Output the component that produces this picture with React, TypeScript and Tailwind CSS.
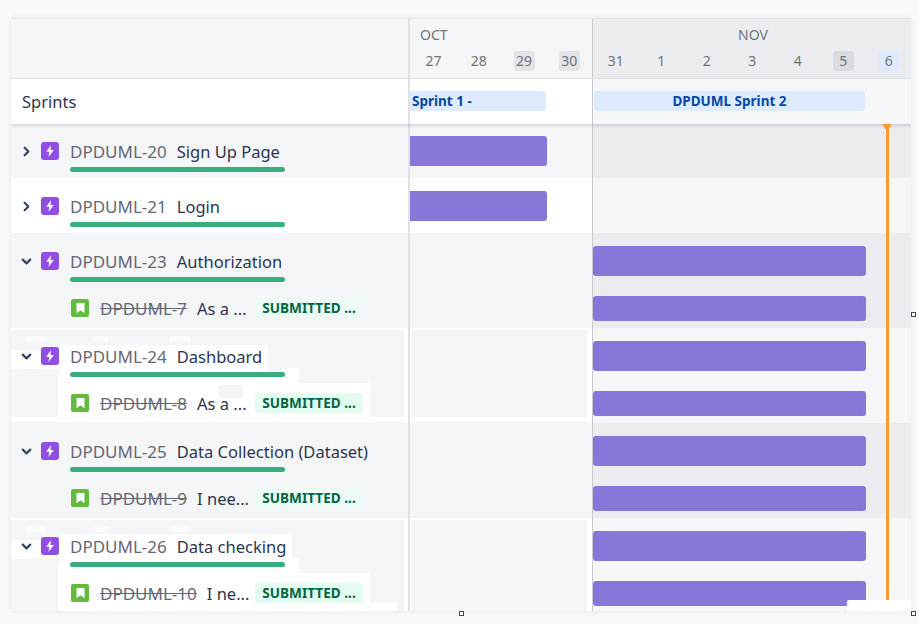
import type { ReactNode } from "react";
import { ChevronDown, ChevronRight } from "lucide-react";

const days = [
  { d: "31" }, { d: "1" }, { d: "2" }, { d: "3" }, { d: "4" },
  { d: "5", cls: "bg-[#d9dbe0]" }, { d: "6", cls: "bg-[#deebff]" },
];

function EpicIcon() {
  return (
    <span className="flex h-[18px] w-[18px] shrink-0 items-center justify-center rounded-[3px] bg-[#904ee2]">
      <svg width="12" height="14" viewBox="0 0 10 12"><path d="M5.9 0.8 1.8 6.7h2.6L3.7 11.2 8.3 5.1H5.4z" fill="#fff" /></svg>
    </span>
  );
}

function StoryIcon() {
  return (
    <span className="flex h-[18px] w-[18px] shrink-0 items-center justify-center rounded-[2px] bg-[#63ba3c]">
      <svg width="11" height="12" viewBox="0 0 10 12"><path d="M1.6 1h6.8a.6.6 0 0 1 .6.6v9.6L5 8.3 1 11.2V1.6a.6.6 0 0 1 .6-.6z" fill="#fff" /></svg>
    </span>
  );
}

function Bar({ h, left }: { h: string; left?: boolean }) {
  return <div className={`bg-[#8777d9] ${h} ${left ? "w-[137px] rounded-r-[3px]" : "w-[273px] rounded-[3px]"}`} />;
}

function EpicLabel({ id, name, open, first }: { id: string; name: string; open?: boolean; first?: boolean }) {
  return (
    <div className={`flex h-[55px] pl-[8px] ${first ? "-mt-[1px]" : ""}`}>
      <span className="flex w-[22px] shrink-0 pt-[21px] text-[#344563]">
        {open ? <ChevronDown size={15} strokeWidth={3.5} /> : <ChevronRight size={15} strokeWidth={3.5} />}
      </span>
      <span className="flex w-[29px] shrink-0 pt-[19px]"><EpicIcon /></span>
      <div className="flex w-[215px] shrink-0 flex-col pt-[17px]">
        <div className="flex h-[24px] items-center whitespace-nowrap leading-[24px]">
          <span className="text-[17px] text-[#636875]">{id}</span>
          <span className="ml-[10px] text-[16.5px] text-[#2c3650]">{name}</span>
        </div>
        <div className="mt-[3px] h-[5px] w-[215px] rounded-full bg-[#38ae7e]" />
      </div>
    </div>
  );
}

function StoryLabel({ id, text, pale }: { id: string; text: string; pale?: boolean }) {
  return (
    <div className="flex h-[40px] items-start pl-[60px]">
      <div className="flex w-[184px] shrink-0 items-start">
        <span className="mt-[11px]"><StoryIcon /></span>
        <span className="ml-[11px] mt-[9px] whitespace-nowrap text-[17px] leading-[24px] text-[#636875] line-through">{id}</span>
        <span className="ml-[10px] mt-[9px] whitespace-nowrap text-[16.5px] leading-[24px] text-[#2c3650]">{text}</span>
      </div>
      <span className={`mt-[10px] flex h-[20px] w-[108px] items-center justify-center rounded-[3px] text-[13.6px] font-bold text-[#006644] ${pale ? "bg-[#ecfaf3]" : "bg-[#e3fcef]"}`}>SUBMITTED ...</span>
    </div>
  );
}

// white smudges that sit behind the text of the re-pasted rows
function Smudge({ cls }: { cls: string }) {
  return <div className={`absolute rounded-[2px] ${cls}`} />;
}

function Row({ left, octBg, novBg, children, oct, h, under, octUnder }: {
  left: ReactNode; octBg: string; novBg: string; children?: ReactNode; oct?: ReactNode; h: string; under?: ReactNode; octUnder?: ReactNode;
}) {
  return (
    <div className={`flex ${h}`}>
      <div className={`relative w-[397px] shrink-0 ${octBg}`}>
        {under}
        <div className="relative">{left}</div>
      </div>
      <div className={`relative w-[184px] shrink-0 border-l-2 border-[#dfe1e6] ${octBg}`}>{octUnder}{oct}</div>
      <div className={`flex-1 border-l border-[#c8cad0] ${novBg}`}>{children}</div>
    </div>
  );
}

function RowSmudges({ wide }: { wide?: boolean }) {
  return (
    <>
      <Smudge cls="left-0 top-0 h-[2px] w-[397px] bg-white" />
      <Smudge cls="left-[393px] top-0 h-[95px] w-[4px] bg-white" />
      {wide
        ? <Smudge cls="left-[47px] top-[85px] h-[8px] w-[340px] bg-white" />
        : <Smudge cls="left-0 top-[89px] h-[5px] w-[397px] bg-white" />}
      <Smudge cls="left-0 top-[22px] h-[19px] w-[52px] bg-white" />
      <Smudge cls="left-[15px] top-[8px] h-[6px] w-[20px] bg-white/60" />
      <Smudge cls="left-[82px] top-[8px] h-[6px] w-[16px] bg-white/60" />
      <Smudge cls="left-[158px] top-[8px] h-[6px] w-[22px] bg-white/60" />
      <Smudge cls={wide ? "left-[49px] top-[16px] h-[34px] w-[232px] bg-white" : "left-[49px] top-[17px] h-[32px] w-[208px] bg-white"} />
      <Smudge cls="left-[270px] top-[40px] h-[13px] w-[18px] bg-white" />
      <Smudge cls="left-[47px] top-[47px] h-[10px] w-[240px] bg-white" />
      <Smudge cls="left-[47px] top-[55px] h-[35px] w-[312px] bg-white" />
      {!wide && <Smudge cls="left-[207px] top-[57px] h-[13px] w-[25px] bg-[#f4f5f7]" />}
    </>
  );
}

function OctSmudges({ wide }: { wide?: boolean }) {
  return (
    <>
      <Smudge cls="left-0 top-0 h-[2px] w-[182px] bg-white" />
      <Smudge cls="left-0 top-0 h-[95px] w-[2px] bg-white" />
      <Smudge cls="left-[177px] top-0 h-[95px] w-[5px] bg-white" />
      {!wide && <Smudge cls="left-0 top-[89px] h-[5px] w-[182px] bg-white" />}
    </>
  );
}

const groups = [
  { id: "DPDUML-23", name: "Authorization", sid: "DPDUML-7", text: "As a ...", shade: true },
  { id: "DPDUML-24", name: "Dashboard", sid: "DPDUML-8", text: "As a ...", shade: false },
  { id: "DPDUML-25", name: "Data Collection (Dataset)", sid: "DPDUML-9", text: "I nee...", shade: true },
  { id: "DPDUML-26", name: "Data checking", sid: "DPDUML-10", text: "I ne...", shade: false, wide: true },
];

export default function App() {
  return (
    <div className="h-[624px] w-[919px] overflow-hidden bg-[#f8f9fa] pl-[11px] pt-[18px] font-['Noto_Sans',sans-serif]">
      <div className="relative h-[593px] w-[900px] overflow-hidden border-t border-[#e3e5e8] shadow-[0_0_6px_rgba(9,30,66,0.08)]">
        {/* month + day header */}
        <div className="flex h-[60px] border-b border-[#dfe1e6]">
          <div className="w-[397px] shrink-0 bg-[#f4f5f7]" />
          <div className="w-[184px] shrink-0 border-l-2 border-[#dfe1e6] bg-[#f4f5f7] text-[14px] text-[#70747c]">
            <div className="h-[32px] pl-[10px] pt-[6px] leading-[20px]">OCT</div>
            <div className="flex pl-[1px] leading-[20px]">
              {["27", "28", "29", "30"].map(d => (
                <div key={d} className="flex w-[45.67px] justify-center">
                  <span className={`flex h-[20px] w-[21px] items-center justify-center rounded-[3px] ${d === "29" || d === "30" ? "bg-[#e2e4e8]" : ""}`}>{d}</span>
                </div>
              ))}
            </div>
          </div>
          <div className="flex-1 border-l border-[#c8cad0] bg-[#ebecf0] text-[14px] text-[#70747c]">
            <div className="h-[32px] pl-[145px] pt-[6px] leading-[20px]">NOV</div>
            <div className="flex leading-[20px]">
              {days.map(x => (
                <div key={x.d} className="flex w-[45.5px] justify-center">
                  <span className={`flex h-[20px] w-[21px] items-center justify-center rounded-[3px] ${x.cls ?? ""}`}>{x.d}</span>
                </div>
              ))}
            </div>
          </div>
        </div>

        {/* sprints row */}
        <div className="relative z-10 flex h-[45px] shadow-[0_2px_3px_rgba(9,30,66,0.14)]">
          <div className="w-[397px] shrink-0 bg-white pl-[11px] pt-[11px] text-[16.5px] leading-[24px] text-[#2c3650]">Sprints</div>
          <div className="w-[184px] shrink-0 border-l-2 border-[#dfe1e6] bg-white pt-[12px]">
            <div className="flex h-[20px] w-[136px] items-center rounded-r-[3px] bg-[#deebff] pl-[2px] text-[13.5px] font-bold text-[#0747a6]">Sprint 1 -</div>
          </div>
          <div className="flex-1 border-l border-[#c8cad0] bg-[#f5f6f8] pl-[1px] pt-[12px]">
            <div className="flex h-[20px] w-[271px] items-center justify-center rounded-[3px] bg-[#deebff] text-[13.5px] font-bold text-[#0747a6]">DPDUML Sprint 2</div>
          </div>
        </div>

        <Row h="h-[54px]" octBg="bg-[#f4f5f7]" novBg="bg-[#ebecf0]" left={<EpicLabel id="DPDUML-20" name="Sign Up Page" first />} oct={<div className="pt-[12px]"><Bar h="h-[30px]" left /></div>} />
        <Row h="h-[55px]" octBg="bg-white" novBg="bg-[#f4f5f7]" left={<EpicLabel id="DPDUML-21" name="Login" />} oct={<div className="pt-[13px]"><Bar h="h-[30px]" left /></div>} />

        {groups.map(g => (
          <Row
            key={g.id}
            h="h-[95px]"
            octBg="bg-[#f4f5f7]"
            novBg={g.shade ? "bg-[#ebecf0]" : "bg-[#f5f6f8]"}
            under={g.shade ? undefined : <RowSmudges wide={g.wide} />}
            octUnder={g.shade ? undefined : <OctSmudges wide={g.wide} />}
            left={<><EpicLabel id={g.id} name={g.name} open /><StoryLabel id={g.sid} text={g.text} pale={g.shade} /></>}
          >
            <div className="pt-[13px]"><Bar h="h-[30px]" /><div className="mt-[20px]"><Bar h="h-[25px]" /></div></div>
          </Row>
        ))}

        {/* today marker */}
        <div className="absolute left-[875px] top-[105px] z-20 h-[477px] w-[3px] bg-[#f79a2f]" />
        <div className="absolute left-[871px] top-[105px] z-20 h-0 w-0 border-x-[5.5px] border-t-[7px] border-x-transparent border-t-[#f79a2f]" />
        {/* white box bottom right */}
        <div className="absolute left-[836px] top-[581px] z-30 h-[12px] w-[64px] rounded-tl-[2px] bg-white" />
      </div>

      {/* resize handles */}
      <div className="absolute left-[911px] top-[312px] h-[5px] w-[5px] border border-[#42474f] bg-white" />
      <div className="absolute left-[459px] top-[611px] h-[5px] w-[5px] border border-[#42474f] bg-white" />
      <div className="absolute left-[911px] top-[611px] h-[5px] w-[5px] border border-[#42474f] bg-white" />
    </div>
  );
}
